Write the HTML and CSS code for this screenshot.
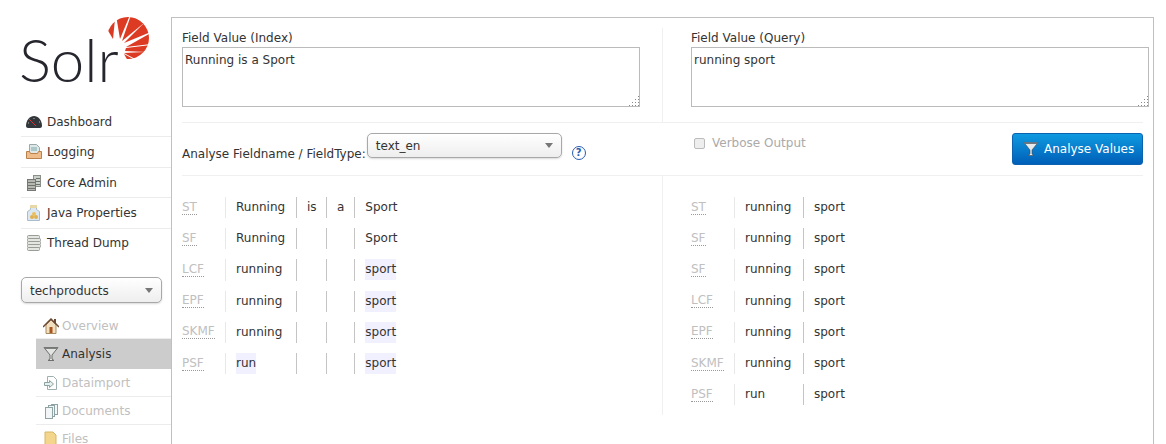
FILE: index.html
```html
<!DOCTYPE html>
<html lang="en">
<head>
<meta charset="UTF-8">
<title>Solr Admin - Analysis</title>
<link rel="stylesheet" href="styles.css">
</head>
<body>
<div id="wrapper">
    <div id="sidebar">
        <div class="logo">
            <span class="logo-text">Solr</span>
            <svg class="logo-sun" width="50" height="50" viewBox="105 14 50 50">
                <defs><clipPath id="sunclip"><circle cx="128" cy="38" r="21"/></clipPath></defs>
                <g fill="#dc3a22" clip-path="url(#sunclip)">
                    <polygon points="107,29 115,19 113,39"/>
                    <polygon points="116,15 130,15 120,39"/>
                    <polygon points="131,15 144,23 122,41"/>
                    <polygon points="144,23 151,32 124,43"/>
                    <polygon points="151,33 151,44 126,47"/>
                    <polygon points="151,45 146,52 125,51 126,48"/>
                    <polygon points="145,52 137,60 124,53"/>
                    <polygon points="135,60 128,61 124,54"/>
                </g>
            </svg>
        </div>
        <ul class="main-nav">
            <li>
                <svg width="16" height="16" viewBox="0 0 16 16"><path d="M0 12C0 6 4 2 8 2s8 4 8 10c0 1-1 2-2 2H2c-1 0-2-1-2-2z" fill="#33363a"/><path d="M3 5l7 7" stroke="#d33"/><path d="M2 9h1M8 4v1M13 8h1" stroke="#bbb"/></svg>
                Dashboard
            </li>
            <li>
                <svg width="16" height="16" viewBox="0 0 16 16"><path d="M3.500.5h7l3 3v7h-10z" fill="#dfe8e6" stroke="#9aa"/><path d="M5 4h6M5 6h6" stroke="#7aa"/><path d="M.5 7.500h3l1 2h7l1-2h3v7H.5z" fill="#eebd8b" stroke="#b9824c"/></svg>
                Logging
            </li>
            <li>
                <svg width="16" height="16" viewBox="0 0 16 16"><rect x="7.500" y="0.500" width="7" height="11" fill="#c9cfc9" stroke="#8a8f8a"/><rect x="1.500" y="4.500" width="8" height="11" fill="#b4b8b0" stroke="#777"/><path d="M2 7.500h7M2 10.500h7M2 13.500h7M10 3.500h4M10 6.500h4M10 9.500h4" stroke="#6f736c"/></svg>
                Core Admin
            </li>
            <li>
                <svg width="16" height="16" viewBox="0 0 16 16"><path d="M4.500 2.500h6v2l3 2v9h-12v-9l3-2z" fill="#dbe8f2" stroke="#a9bccb"/><rect x="4" y="0" width="7" height="3" fill="#e8d8a8"/><circle cx="6" cy="12" r="2" fill="#e0b050"/><circle cx="10" cy="12" r="2" fill="#e0b050"/><circle cx="8" cy="9" r="2" fill="#e8c060"/></svg>
                Java Properties
            </li>
            <li>
                <svg width="16" height="16" viewBox="0 0 16 16"><g fill="#e4e6e2" stroke="#9a9c98"><rect x="1.500" y="0.500" width="12" height="3" rx="1"/><rect x="1.500" y="3.500" width="13" height="3" rx="1"/><rect x="1.500" y="6.500" width="13" height="3" rx="1"/><rect x="1.500" y="9.500" width="13" height="3" rx="1"/><rect x="1.500" y="12.500" width="12" height="3" rx="1"/></g></svg>
                Thread Dump
            </li>
        </ul>
        <div class="core-select"><span>techproducts</span><i class="arrow"></i></div>
        <ul class="core-nav">
            <li class="off first">
                <svg width="16" height="16" viewBox="0 0 16 16"><path d="M3 7v8.500h10V7L8 2z" fill="#f2dfc0" stroke="#a98b60"/><path d="M11 1h2v4h-2z" fill="#6a4a34"/><path d="M0 9l8-8 8 8" fill="none" stroke="#6a4a34" stroke-width="1.500"/><rect x="6.500" y="9" width="3" height="6" fill="#a8561f"/></svg>
                Overview
            </li>
            <li class="active">
                <svg width="16" height="16" viewBox="0 0 16 16"><path d="M1 1.500h14L9 9v4l2 1.500H5L7 13V9z" fill="#e2e4e2" stroke="#6d706d"/><path d="M1 1.500h14L14 3H2z" fill="#7c7f7c"/></svg>
                Analysis
            </li>
            <li class="off">
                <svg width="16" height="16" viewBox="0 0 16 16"><path d="M4.500 1.500h6l3 3v10h-9z" fill="#fff" stroke="#9db0ae"/><path d="M1.500 7.500h5v-2l4 3.500-4 3.500v-2h-5z" fill="#e6f0ee" stroke="#8aa3a0"/></svg>
                Dataimport
            </li>
            <li class="off">
                <svg width="16" height="16" viewBox="0 0 16 16"><g fill="#f2f6f6" stroke="#8ea3a3"><rect x="8.500" y="1.500" width="6" height="10"/><rect x="5.500" y="2.500" width="6" height="11"/><rect x="2.500" y="4.500" width="7" height="11"/></g></svg>
                Documents
            </li>
            <li class="off">
                <svg width="16" height="16" viewBox="0 0 16 16"><path d="M2 1h8l3 3v11H2z" fill="#f3d68c" stroke="#d8b566"/></svg>
                Files
            </li>
        </ul>
    </div>
    <div id="main">
        <div class="col col-left fields">
            <label class="field-label" for="indexValue">Field Value (Index)</label>
            <div class="area">
                <textarea id="indexValue">Running is a Sport</textarea>
                <svg class="grip" width="11" height="11" viewBox="0 0 11 11"><path d="M10 1h1v1h-1zM7 4h1v1H7zM10 4h1v1h-1zM4 7h1v1H4zM7 7h1v1H7zM10 7h1v1h-1zM1 10h1v1H1zM4 10h1v1H4zM7 10h1v1H7zM10 10h1v1h-1z" fill="#888"/></svg>
            </div>
        </div>
        <div class="col col-right fields">
            <label class="field-label" for="queryValue">Field Value (Query)</label>
            <div class="area">
                <textarea id="queryValue">running sport</textarea>
                <svg class="grip" width="11" height="11" viewBox="0 0 11 11"><path d="M10 1h1v1h-1zM7 4h1v1H7zM10 4h1v1h-1zM4 7h1v1H4zM7 7h1v1H7zM10 7h1v1h-1zM1 10h1v1H1zM4 10h1v1H4zM7 10h1v1H7zM10 10h1v1h-1z" fill="#888"/></svg>
            </div>
        </div>
        <div class="settings">
            <label class="type-label">Analyse Fieldname / FieldType:</label>
            <div class="type-select"><span>text_en</span><i class="arrow"></i></div>
            <span class="help">?</span>
        </div>
        <div class="col-right settings settings-right">
            <label class="verbose"><i class="check"></i>Verbose Output</label>
            <div class="analyse-btn">
                <svg width="16" height="16" viewBox="0 0 16 16"><path d="M1 1.500h14L9 9v4l2 1.500H5L7 13V9z" fill="#e8ebeb" stroke="#3d4a55" stroke-width=".6"/><path d="M1 1.500h14L14 3H2z" fill="#70787e"/></svg>
                Analyse Values
            </div>
        </div>
        <div class="col col-left result">
            <table>
                <tr><th><abbr>ST</abbr></th><td><div>Running</div></td><td><div>is</div></td><td><div>a</div></td><td><div>Sport</div></td></tr>
                <tr><th><abbr>SF</abbr></th><td><div>Running</div></td><td></td><td></td><td><div>Sport</div></td></tr>
                <tr><th><abbr>LCF</abbr></th><td><div>running</div></td><td></td><td></td><td><div class="match">sport</div></td></tr>
                <tr><th><abbr>EPF</abbr></th><td><div>running</div></td><td></td><td></td><td><div class="match">sport</div></td></tr>
                <tr><th><abbr>SKMF</abbr></th><td><div>running</div></td><td></td><td></td><td><div class="match">sport</div></td></tr>
                <tr><th><abbr>PSF</abbr></th><td><div class="match">run</div></td><td></td><td></td><td><div class="match">sport</div></td></tr>
            </table>
        </div>
        <div class="col col-right result">
            <table>
                <tr><th><abbr>ST</abbr></th><td><div>running</div></td><td><div>sport</div></td></tr>
                <tr><th><abbr>SF</abbr></th><td><div>running</div></td><td><div>sport</div></td></tr>
                <tr><th><abbr>SF</abbr></th><td><div>running</div></td><td><div>sport</div></td></tr>
                <tr><th><abbr>LCF</abbr></th><td><div>running</div></td><td><div>sport</div></td></tr>
                <tr><th><abbr>EPF</abbr></th><td><div>running</div></td><td><div>sport</div></td></tr>
                <tr><th><abbr>SKMF</abbr></th><td><div>running</div></td><td><div>sport</div></td></tr>
                <tr><th><abbr>PSF</abbr></th><td><div>run</div></td><td><div>sport</div></td></tr>
            </table>
        </div>
    </div>
</div>
</body>
</html>
```

FILE: styles.css
```css
html, body {
    margin: 0;
    height: 444px;
    overflow: hidden;
    background-color: #fff;
}

body {
    font-family: "DejaVu Sans", sans-serif;
    font-size: 12px;
    color: #333;
}

#wrapper {
    display: flex;
    width: 1154px;
}

#sidebar {
    width: 171px;
    flex: none;
}

.logo {
    position: relative;
    height: 107px;
}

.logo-text {
    position: absolute;
    left: 19px;
    top: 24px;
    font-family: Lato, sans-serif;
    font-weight: 300;
    font-size: 60px;
    line-height: 70px;
    color: #26262e;
}

.logo-sun {
    position: absolute;
    left: 105px;
    top: 14px;
}

ul {
    list-style: none;
    margin: 0;
    padding: 0;
}

.main-nav {
    margin-left: 21px;
}

.main-nav li {
    display: flex;
    align-items: center;
    gap: 5px;
    height: 29.420px;
    border-bottom: 1px solid #ececec;
    padding-left: 5px;
}

.main-nav li:last-child {
    border-bottom: none;
}

.core-select {
    display: flex;
    align-items: center;
    justify-content: space-between;
    box-sizing: border-box;
    width: 141px;
    height: 26px;
    margin: 19px 0 0 21px;
    padding: 0 8px;
    border: 1px solid #a8a8a8;
    border-radius: 5px;
    background: linear-gradient(#fff, #eee);
    box-shadow: 0 1px 2px rgba(0, 0, 0, 0.15);
}

.core-select span {
    margin-top: 1px;
}

.arrow {
    width: 0;
    height: 0;
    border-left: 4px solid transparent;
    border-right: 4px solid transparent;
    border-top: 5px solid #777;
}

.core-nav {
    margin: 8px 0 0 36px;
}

.core-nav li {
    display: flex;
    align-items: center;
    gap: 3px;
    height: 26px;
    padding-top: 1px;
    border-bottom: 1px solid #ececec;
    padding-left: 7px;
}

.core-nav .off {
    color: #c0c0c0;
}

.core-nav .first {
    height: 25px;
    padding-top: 2px;
}

.core-nav .active {
    height: 28px;
    background-color: #ccc;
    border-bottom-color: #ccc;
}

#main {
    flex: 1;
    display: grid;
    grid-template-columns: 481px 480px;
    grid-template-rows: 105px 53px 240px;
    margin-top: 17px;
    height: 440px;
    border: 1px solid #c0c0c0;
    border-bottom: none;
    padding-left: 10px;
    padding-right: 9px;
}

.col-left {
    border-right: 1px solid #f0f0f0;
}

.col-right {
    padding-left: 28px;
}

.fields {
    border-bottom: 1px solid #f0f0f0;
    margin-top: 10px;
    padding-top: 1px;
}

.field-label {
    display: block;
    height: 18px;
    line-height: 18px;
}

.area {
    position: relative;
    width: 458px;
}

.grip {
    position: absolute;
    right: 1px;
    bottom: 1px;
}

textarea {
    display: block;
    box-sizing: border-box;
    width: 458px;
    height: 60px;
    margin: 0;
    padding: 5px 2px;
    border: 1px solid #bbb;
    outline: none;
    resize: none;
    font-family: inherit;
    font-size: 12px;
    color: #333;
}

.settings {
    display: flex;
    align-items: flex-start;
    border-bottom: 1px solid #f0f0f0;
}

.type-label {
    margin-top: 24px;
}

.type-select {
    display: flex;
    align-items: center;
    justify-content: space-between;
    box-sizing: border-box;
    width: 195px;
    height: 25px;
    margin: 10px 0 0 1px;
    padding: 0 8px;
    border: 1px solid #a8a8a8;
    border-radius: 5px;
    background: linear-gradient(#fff, #eee);
    box-shadow: 0 1px 2px rgba(0, 0, 0, 0.15);
}

.help {
    box-sizing: border-box;
    width: 14px;
    height: 14px;
    margin: 23px 0 0 10px;
    border: 1.500px solid #2a5db0;
    border-radius: 50%;
    font-size: 10px;
    font-weight: bold;
    line-height: 11px;
    text-align: center;
    color: #2a5db0;
}

.settings-right {
    justify-content: space-between;
    padding-left: 31px;
}

.verbose {
    display: flex;
    align-items: center;
    gap: 7px;
    margin-top: 11px;
    color: #aaa;
    line-height: 18px;
}

.check {
    width: 9px;
    height: 9px;
    border: 1px solid #bbb;
    border-radius: 2px;
    background-color: #eee;
}

.analyse-btn {
    display: flex;
    align-items: center;
    gap: 5px;
    box-sizing: border-box;
    width: 131px;
    height: 32px;
    margin-top: 10px;
    padding-left: 10px;
    border: 1px solid #0a62b0;
    border-radius: 3px;
    background: linear-gradient(#0f9ae0, #005fb8);
    color: #fff;
}

.result {
    padding-top: 11px;
    height: 228px;
}

table {
    border-collapse: separate;
    border-spacing: 0 10px;
}

th, td {
    height: 21.200px;
    padding: 0;
    font-weight: normal;
    text-align: left;
    border-right: 1px solid #c4c4c4;
}

th {
    width: 43px;
    height: 19.200px;
    padding-bottom: 2px;
    border-right-color: #e8e8e8;
}

td:last-child {
    border-right: none;
}

td:nth-child(2) {
    min-width: 70px;
}

td:nth-child(3) {
    min-width: 29px;
}

td:nth-child(3) div {
    margin-right: 9px;
}

td:nth-child(4) {
    min-width: 27px;
}

.col-right td:nth-child(2) {
    min-width: 68px;
}

td div {
    margin: 0 10px;
    line-height: 21px;
    width: fit-content;
}

td .match {
    background-color: #f0f0ff;
}

abbr {
    color: #c0c0c0;
    border-bottom: 1px dotted #999;
}
```
